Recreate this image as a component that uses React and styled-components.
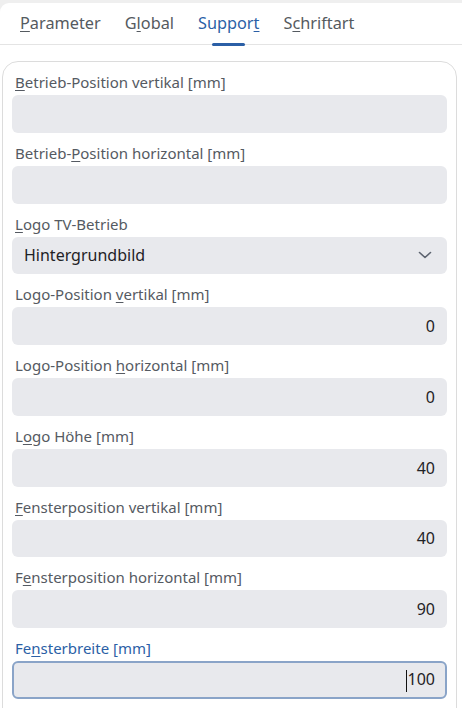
import React from "react";
import styled, { createGlobalStyle } from "styled-components";

const Global = createGlobalStyle`
  html, body { margin: 0; padding: 0; background: #efefef; }
  body { font-family: "Noto Sans", "Open Sans", sans-serif; }
  #root { height: 708px; }
`;

const Window = styled.div`
  margin-top: 3px;
  height: 705px;
  background: #ffffff;
  border-top-left-radius: 9px;
  overflow: hidden;
  display: flex;
  flex-direction: column;
`;

const TabBar = styled.div`
  display: flex;
  align-items: stretch;
  gap: 24px;
  height: 41px;
  padding-left: 20px;
  border-bottom: 1px solid #e4e4e4;
  flex-shrink: 0;
`;

const Tab = styled.div`
  position: relative;
  display: flex;
  align-items: center;
  padding-bottom: 2px;
  font-size: 16.3px;
  color: ${(p) => (p.$active ? "#2b5fa6" : "#555a60")};
  &::after {
    content: "";
    display: ${(p) => (p.$active ? "block" : "none")};
    position: absolute;
    left: 50%;
    bottom: -2px;
    width: 33px;
    margin-left: -17px;
    height: 3px;
    border-radius: 2px;
    background: #2b5fa6;
  }
`;

const Key = styled.span`
  text-decoration: underline;
  text-underline-offset: 2px;
  text-decoration-thickness: 1px;
`;

const Content = styled.div`
  padding: 16px 5px 0 2px;
  flex: 1;
`;

const Card = styled.div`
  border: 1px solid #dcdcdc;
  border-radius: 16px;
  padding: 0 9px 0 9px;
  height: 700px;
  box-sizing: border-box;
`;

const FieldGroup = styled.div`
  display: flex;
  flex-direction: column;
`;

const Label = styled.div`
  height: 33px;
  box-sizing: border-box;
  padding: 10px 0 0 3px;
  line-height: 20px;
  font-size: 15px;
  color: ${(p) => (p.$focused ? "#2b5fa6" : "#555a62")};
`;

const Input = styled.div`
  height: 37.75px;
  box-sizing: border-box;
  border-radius: 6px;
  background: #e8e9ed;
  border: ${(p) => (p.$focused ? "2px solid #8aa4c8" : "none")};
  display: flex;
  align-items: center;
  justify-content: ${(p) => (p.$select ? "space-between" : "flex-end")};
  padding: 0 ${(p) => (p.$focused ? "10px" : "12px")};
  font-size: 16px;
  color: #1f2226;
`;

const Caret = styled.span`
  display: inline-block;
  width: 1px;
  height: 22px;
  background: #111;
  margin-right: 1px;
  vertical-align: middle;
`;

const Chevron = () => (
  <svg width="16" height="16" viewBox="0 0 16 16" fill="none" style={{ marginRight: 2 }}>
    <path d="M2.5 5.5 L8 10.5 L13.5 5.5" stroke="#5d6470" strokeWidth="1.6" strokeLinecap="round" strokeLinejoin="round" />
  </svg>
);

const L = ({ pre = "", k = "", post = "" }) => (
  <>
    {pre}
    {k && <Key>{k}</Key>}
    {post}
  </>
);

const fields = [
  { label: <L k="B" post="etrieb-Position vertikal [mm]" />, value: "" },
  { label: <L pre="Betrieb-" k="P" post="osition horizontal [mm]" />, value: "" },
  { label: <L k="L" post="ogo TV-Betrieb" />, value: "Hintergrundbild", select: true },
  { label: <L pre="Logo-Position " k="v" post="ertikal [mm]" />, value: "0" },
  { label: <L pre="Logo-Position " k="h" post="orizontal [mm]" />, value: "0" },
  { label: <L pre="L" k="o" post="go Höhe [mm]" />, value: "40" },
  { label: <L k="F" post="ensterposition vertikal [mm]" />, value: "40" },
  { label: <L pre="F" k="e" post="nsterposition horizontal [mm]" />, value: "90" },
  { label: <L pre="Fe" k="n" post="sterbreite [mm]" />, value: "100", focused: true },
];

export default function App() {
  return (
    <>
      <Global />
      <Window>
        <TabBar>
          <Tab><span><Key>P</Key>arameter</span></Tab>
          <Tab><span>G<Key>l</Key>obal</span></Tab>
          <Tab $active><span>Suppor<Key>t</Key></span></Tab>
          <Tab><span>S<Key>c</Key>hriftart</span></Tab>
        </TabBar>
        <Content>
          <Card>
            {fields.map((f, i) => (
              <FieldGroup key={i}>
                <Label $focused={f.focused}>{f.label}</Label>
                <Input $select={f.select} $focused={f.focused}>
                  {f.select ? (
                    <>
                      <span>{f.value}</span>
                      <Chevron />
                    </>
                  ) : (
                    <span>
                      {f.focused && <Caret />}
                      {f.value}
                    </span>
                  )}
                </Input>
              </FieldGroup>
            ))}
          </Card>
        </Content>
      </Window>
    </>
  );
}
